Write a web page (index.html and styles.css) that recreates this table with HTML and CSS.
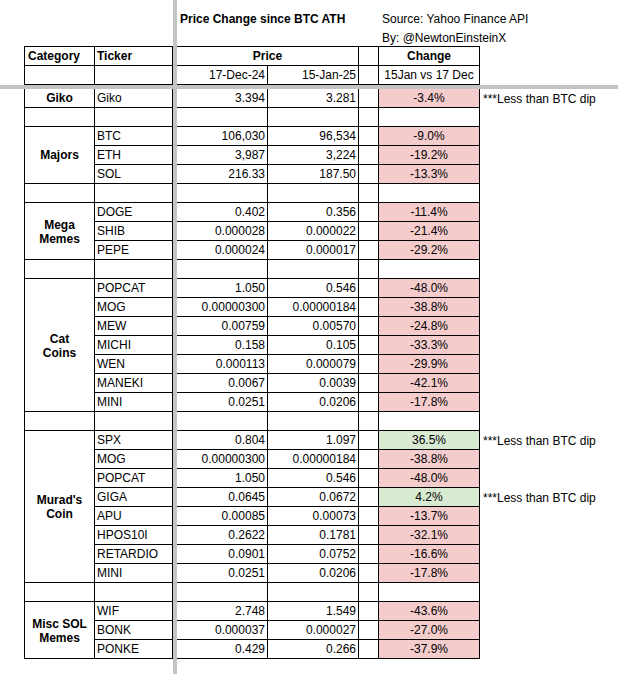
FILE: index.html
```html
<!DOCTYPE html>
<html>
<head>
<meta charset="utf-8">
<title>Price Change since BTC ATH</title>
<link rel="stylesheet" href="styles.css">
</head>
<body>
<table class="sheet">
<colgroup>
<col class="c-a"><col class="c-cat"><col class="c-tk"><col class="c-fz"><col class="c-d"><col class="c-e"><col class="c-f"><col class="c-g"><col class="c-h">
</colgroup>
<tbody>
<tr class="r-title"><td></td><td></td><td></td><td class="freeze" rowspan="36"></td><td class="title">Price Change since BTC ATH</td><td></td><td></td><td class="info">Source: Yahoo Finance API</td><td></td></tr>
<tr class="r-by"><td></td><td></td><td></td><td></td><td></td><td></td><td class="info">By: @NewtonEinsteinX</td><td></td></tr>
<tr class="r-h1"><td></td><td class="cat top hd-left">Category</td><td class="tk top hd">Ticker</td><td class="num top hd-center" colspan="2">Price</td><td class="f top"></td><td class="chg top hd">Change</td><td></td></tr>
<tr class="row"><td></td><td class="cat"></td><td class="tk"></td><td class="num">17-Dec-24</td><td class="num">15-Jan-25</td><td class="f"></td><td class="chg">15Jan vs 17 Dec</td><td></td></tr>
<tr class="r-freeze"><td class="freeze" colspan="3"></td><td class="freeze" colspan="5"></td></tr>

<tr class="row"><td></td><td class="cat">Giko</td><td class="tk">Giko</td><td class="num">3.394</td><td class="num">3.281</td><td class="f"></td><td class="chg neg">-3.4%</td><td class="note">***Less than BTC dip</td></tr>
<tr class="row"><td></td><td class="cat"></td><td class="tk"></td><td class="num"></td><td class="num"></td><td class="f"></td><td class="chg"></td><td></td></tr>

<tr class="row"><td></td><td class="cat" rowspan="3">Majors</td><td class="tk">BTC</td><td class="num">106,030</td><td class="num">96,534</td><td class="f"></td><td class="chg neg">-9.0%</td><td></td></tr>
<tr class="row"><td></td><td class="tk">ETH</td><td class="num">3,987</td><td class="num">3,224</td><td class="f"></td><td class="chg neg">-19.2%</td><td></td></tr>
<tr class="row"><td></td><td class="tk">SOL</td><td class="num">216.33</td><td class="num">187.50</td><td class="f"></td><td class="chg neg">-13.3%</td><td></td></tr>
<tr class="row"><td></td><td class="cat"></td><td class="tk"></td><td class="num"></td><td class="num"></td><td class="f"></td><td class="chg"></td><td></td></tr>

<tr class="row"><td></td><td class="cat two" rowspan="3">Mega<br>Memes</td><td class="tk">DOGE</td><td class="num">0.402</td><td class="num">0.356</td><td class="f"></td><td class="chg neg">-11.4%</td><td></td></tr>
<tr class="row"><td></td><td class="tk">SHIB</td><td class="num">0.000028</td><td class="num">0.000022</td><td class="f"></td><td class="chg neg">-21.4%</td><td></td></tr>
<tr class="row"><td></td><td class="tk">PEPE</td><td class="num">0.000024</td><td class="num">0.000017</td><td class="f"></td><td class="chg neg">-29.2%</td><td></td></tr>
<tr class="row"><td></td><td class="cat"></td><td class="tk"></td><td class="num"></td><td class="num"></td><td class="f"></td><td class="chg"></td><td></td></tr>

<tr class="row"><td></td><td class="cat two" rowspan="7">Cat<br>Coins</td><td class="tk">POPCAT</td><td class="num">1.050</td><td class="num">0.546</td><td class="f"></td><td class="chg neg">-48.0%</td><td></td></tr>
<tr class="row"><td></td><td class="tk">MOG</td><td class="num">0.00000300</td><td class="num">0.00000184</td><td class="f"></td><td class="chg neg">-38.8%</td><td></td></tr>
<tr class="row"><td></td><td class="tk">MEW</td><td class="num">0.00759</td><td class="num">0.00570</td><td class="f"></td><td class="chg neg">-24.8%</td><td></td></tr>
<tr class="row"><td></td><td class="tk">MICHI</td><td class="num">0.158</td><td class="num">0.105</td><td class="f"></td><td class="chg neg">-33.3%</td><td></td></tr>
<tr class="row"><td></td><td class="tk">WEN</td><td class="num">0.000113</td><td class="num">0.000079</td><td class="f"></td><td class="chg neg">-29.9%</td><td></td></tr>
<tr class="row"><td></td><td class="tk">MANEKI</td><td class="num">0.0067</td><td class="num">0.0039</td><td class="f"></td><td class="chg neg">-42.1%</td><td></td></tr>
<tr class="row"><td></td><td class="tk">MINI</td><td class="num">0.0251</td><td class="num">0.0206</td><td class="f"></td><td class="chg neg">-17.8%</td><td></td></tr>
<tr class="row"><td></td><td class="cat"></td><td class="tk"></td><td class="num"></td><td class="num"></td><td class="f"></td><td class="chg"></td><td></td></tr>

<tr class="row"><td></td><td class="cat two" rowspan="8">Murad's<br>Coin</td><td class="tk">SPX</td><td class="num">0.804</td><td class="num">1.097</td><td class="f"></td><td class="chg pos">36.5%</td><td class="note">***Less than BTC dip</td></tr>
<tr class="row"><td></td><td class="tk">MOG</td><td class="num">0.00000300</td><td class="num">0.00000184</td><td class="f"></td><td class="chg neg">-38.8%</td><td></td></tr>
<tr class="row"><td></td><td class="tk">POPCAT</td><td class="num">1.050</td><td class="num">0.546</td><td class="f"></td><td class="chg neg">-48.0%</td><td></td></tr>
<tr class="row"><td></td><td class="tk">GIGA</td><td class="num">0.0645</td><td class="num">0.0672</td><td class="f"></td><td class="chg pos">4.2%</td><td class="note">***Less than BTC dip</td></tr>
<tr class="row"><td></td><td class="tk">APU</td><td class="num">0.00085</td><td class="num">0.00073</td><td class="f"></td><td class="chg neg">-13.7%</td><td></td></tr>
<tr class="row"><td></td><td class="tk">HPOS10I</td><td class="num">0.2622</td><td class="num">0.1781</td><td class="f"></td><td class="chg neg">-32.1%</td><td></td></tr>
<tr class="row"><td></td><td class="tk">RETARDIO</td><td class="num">0.0901</td><td class="num">0.0752</td><td class="f"></td><td class="chg neg">-16.6%</td><td></td></tr>
<tr class="row"><td></td><td class="tk">MINI</td><td class="num">0.0251</td><td class="num">0.0206</td><td class="f"></td><td class="chg neg">-17.8%</td><td></td></tr>
<tr class="row"><td></td><td class="cat"></td><td class="tk"></td><td class="num"></td><td class="num"></td><td class="f"></td><td class="chg"></td><td></td></tr>

<tr class="row"><td></td><td class="cat two" rowspan="3">Misc SOL<br>Memes</td><td class="tk">WIF</td><td class="num">2.748</td><td class="num">1.549</td><td class="f"></td><td class="chg neg">-43.6%</td><td></td></tr>
<tr class="row"><td></td><td class="tk">BONK</td><td class="num">0.000037</td><td class="num">0.000027</td><td class="f"></td><td class="chg neg">-27.0%</td><td></td></tr>
<tr class="row"><td></td><td class="tk">PONKE</td><td class="num">0.429</td><td class="num">0.266</td><td class="f"></td><td class="chg neg">-37.9%</td><td></td></tr>

<tr class="r-fill"><td></td><td></td><td></td><td></td><td></td><td></td><td></td><td></td></tr>
</tbody>
</table>
</body>
</html>
```

FILE: styles.css
```css
html, body {
  margin: 0;
  padding: 0;
  background: #ffffff;
}

body {
  width: 618px;
  height: 674px;
  overflow: hidden;
}

.sheet {
  border-collapse: separate;
  border-spacing: 0;
  table-layout: fixed;
  width: 618px;
  font-family: "Liberation Sans", Arial, sans-serif;
  font-size: 12px;
  color: #000000;
}

.c-a { width: 24px; }
.c-cat { width: 71px; }
.c-tk { width: 78px; }
.c-fz { width: 4px; }
.c-d { width: 91px; }
.c-e { width: 91px; }
.c-f { width: 20px; }
.c-g { width: 101px; }
.c-h { width: 138px; }

td {
  padding: 0;
  line-height: 17px;
  white-space: nowrap;
  overflow: visible;
  vertical-align: middle;
}

.r-title { height: 27px; }
.r-by { height: 19px; }
.r-h1 { height: 20px; }
.row { height: 19px; }
.r-freeze { height: 4px; }
.r-fill { height: 15px; }

.r-title td, .r-by td {
  vertical-align: bottom;
  line-height: 15px;
}

.r-h1 td, .row td {
  padding-top: 1px;
}

.freeze {
  background: #c4c4c4;
}

.title {
  font-weight: bold;
  padding-left: 3px;
}

.info {
  padding-left: 3px;
}

.cat {
  border-left: 1px solid #000;
  border-right: 1px solid #000;
  border-bottom: 1px solid #000;
  font-weight: bold;
  text-align: center;
}

.cat.two {
  line-height: 14px;
  white-space: normal;
}

.tk {
  border-right: 1px solid #000;
  border-bottom: 1px solid #000;
  padding-left: 2px;
}

.num {
  border-right: 1px solid #000;
  border-bottom: 1px solid #000;
  text-align: right;
  padding-right: 2px;
}

.f {
  border-right: 1px solid #000;
  border-bottom: 1px solid #000;
}

.chg {
  border-right: 1px solid #000;
  border-bottom: 1px solid #000;
  text-align: center;
}

.neg { background: #f4cccc; }
.pos { background: #d9ead3; }

.note {
  padding-left: 3px;
}

.top {
  border-top: 1px solid #000;
}

.hd { font-weight: bold; }

.hd-left {
  font-weight: bold;
  text-align: left;
  padding-left: 3px;
}

.hd-center {
  font-weight: bold;
  text-align: center;
  padding-right: 0;
}
```
